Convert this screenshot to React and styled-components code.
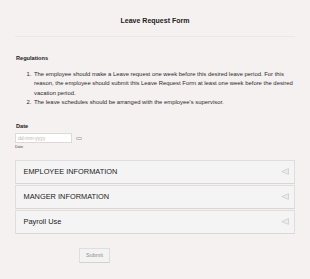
import React from "react";
import styled, { createGlobalStyle } from "styled-components";

const Global = createGlobalStyle`
  html, body { margin: 0; padding: 0; background: #f5f1f0; }
  body { font-family: "Liberation Sans", Arial, sans-serif; color: #222; }
`;

const Page = styled.div`
  padding: 0 15px;
  width: 310px;
  height: 279px;
  box-sizing: border-box;
  overflow: hidden;
`;

const Header = styled.div`
  padding-top: 16px;
  height: 20px;
  border-bottom: 1px solid #ebe7e6;
  text-align: center;
`;

const Title = styled.h1`
  margin: 0;
  font-size: 7px;
  line-height: 9px;
  font-weight: bold;
  color: #222;
`;

const SectionTitle = styled.h2`
  margin: ${(p) => p.$mt}px 0 0 1px;
  font-size: 5.6px;
  line-height: 7px;
  font-weight: bold;
  color: #222;
`;

const List = styled.ol`
  margin: 7.5px 0 0 0;
  padding-left: 18px;
  font-size: 5.9px;
  line-height: 9.6px;
  color: #2a2a2a;
  li { padding-left: 1px; }
`;

const DateRow = styled.div`
  display: flex;
  align-items: center;
  gap: 4px;
  margin-top: 3px;
`;

const DateInput = styled.div`
  width: 57px;
  height: 10px;
  box-sizing: border-box;
  border: 1px solid #dcd9d8;
  background: #fff;
  font-size: 5px;
  line-height: 8px;
  color: #b4b4b4;
  padding-left: 2px;
`;

const CalIcon = styled.span`
  display: inline-block;
  width: 4px;
  height: 1px;
  margin-top: 1px;
  border: 1px solid #bdbdbd;
  border-radius: 1px;
`;

const SubLabel = styled.div`
  font-size: 3.8px;
  line-height: 5px;
  color: #444;
  margin-top: 2px;
`;

const Accordion = styled.div`
  margin-top: 10px;
  display: flex;
  flex-direction: column;
  gap: 1px;
`;

const Panel = styled.div`
  height: 24px;
  box-sizing: border-box;
  border: 1px solid #e0dedd;
  border-bottom-color: #d9d7d6;
  background: #f4f4f4;
  display: flex;
  align-items: center;
  justify-content: space-between;
  padding: 0 5px 0 7.5px;
  font-size: 7.4px;
  color: #222;
`;

const Arrow = () => (
  <svg width="8" height="7" viewBox="0 0 8 7">
    <path d="M7.5 0.6 L0.8 3.6 L7.5 6.4 Z" fill="#eceaea" stroke="#c9c9c9" strokeWidth="0.7" strokeLinejoin="round" />
  </svg>
);

const SubmitRow = styled.div`
  margin-top: 14px;
  padding-left: 64px;
  display: flex;
`;

const SubmitButton = styled.button`
  width: 31px;
  height: 15px;
  box-sizing: border-box;
  border: 1px solid #e0dddc;
  border-bottom-color: #d4d1d0;
  background: #f4f3f3;
  font-family: inherit;
  font-size: 5.4px;
  color: #8a8a8a;
  padding: 0;
`;

export default function App() {
  return (
    <>
      <Global />
      <Page>
        <Header>
          <Title>Leave Request Form</Title>
        </Header>
        <SectionTitle $mt={18}>Regulations</SectionTitle>
        <List>
          <li>
            The employee should make a Leave request one week before this desired leave period. For this
            reason, the employee should submit this Leave Request Form at least one week before the desired
            vacation period.
          </li>
          <li>The leave schedules should be arranged with the employee's supervisor.</li>
        </List>
        <SectionTitle $mt={15}>Date</SectionTitle>
        <DateRow>
          <DateInput>dd-mm-yyyy</DateInput>
          <CalIcon />
        </DateRow>
        <SubLabel>Date</SubLabel>
        <Accordion>
          <Panel>EMPLOYEE INFORMATION<Arrow /></Panel>
          <Panel>MANGER INFORMATION<Arrow /></Panel>
          <Panel>Payroll Use<Arrow /></Panel>
        </Accordion>
        <SubmitRow>
          <SubmitButton>Submit</SubmitButton>
        </SubmitRow>
      </Page>
    </>
  );
}
